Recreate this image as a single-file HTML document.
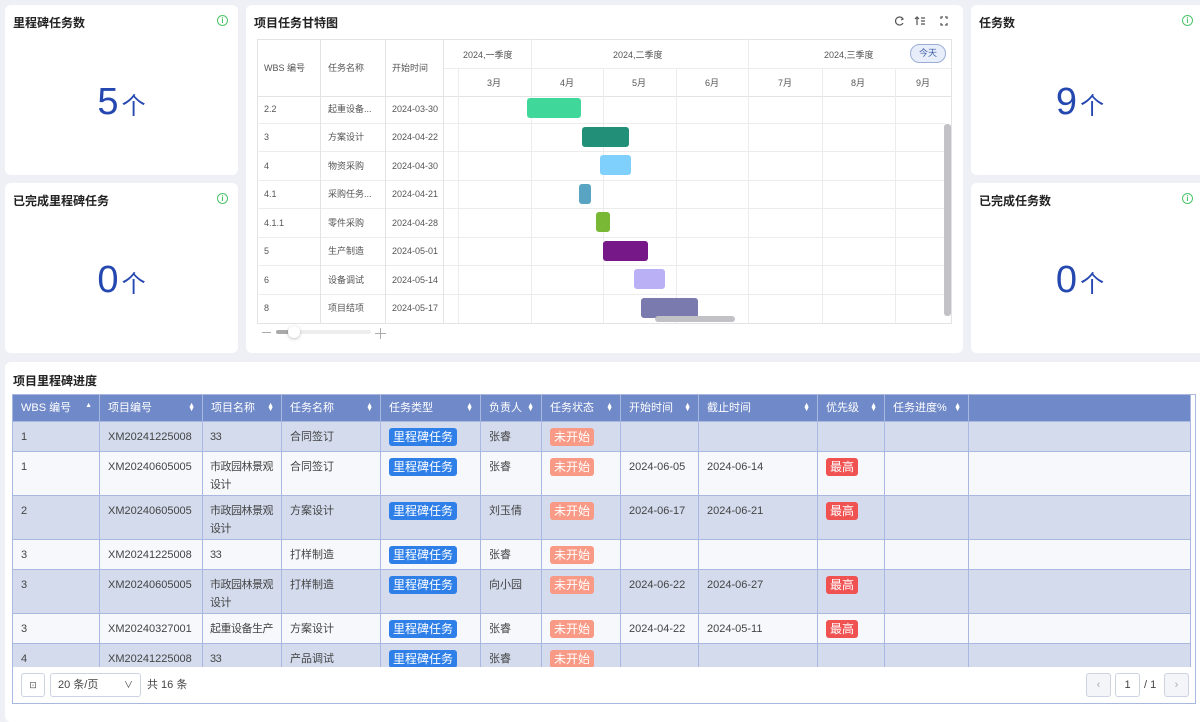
<!DOCTYPE html>
<html><head><meta charset="utf-8"><style>
*{box-sizing:border-box;margin:0;padding:0}
body{width:1200px;height:712px;overflow:hidden;background:#eef0f6;font-family:"Liberation Sans","Noto Sans CJK SC",sans-serif;color:#333;position:relative}
.card{position:absolute;background:#fff;border-radius:6px}
.ttl{position:absolute;left:8px;top:9px;font-size:12px;font-weight:bold;color:#222}
.info{position:absolute;top:10px;width:11px;height:11px;border:1.3px solid #4cc46a;border-radius:50%;font-size:8px;color:#4cc46a;text-align:center;line-height:9px;font-weight:bold}
.num{position:absolute;left:0;right:0;text-align:center;color:#2547b0}
.num b{font-weight:normal;font-size:38px}
.num span{font-size:24px;margin-left:3px}
.a{position:absolute}
.g{position:absolute;font-size:9px;color:#555;line-height:12px;height:12px}
.r{margin-top:2px}
.hl{position:absolute;height:1px;background:#ececec}
.vl{position:absolute;width:1px;background:#ececec}
.bar{position:absolute;border-radius:3px}
table{border-collapse:collapse;table-layout:fixed;font-size:11px}
td,th{border:1px solid #a9b8e0;padding:0 4px 0 8px;text-align:left;vertical-align:top;overflow:hidden}
th{background:#7089c8;color:#fff;font-weight:normal;height:27px;vertical-align:middle;position:relative;line-height:14px}
th i{position:absolute;right:7px;top:9px;font-style:normal;font-size:7px;line-height:4px;color:#fff}
td{color:#444;padding-top:6px;line-height:18px}
td.n{padding-left:7px;padding-right:0;letter-spacing:-0.5px}
tr.o td{background:#d3dbed}
tr.e td{background:#f7f8fb}
.tb,.ts,.tp{display:inline-block;color:#fff;border-radius:3px;line-height:18px;height:18px;font-size:12px;vertical-align:top}
.tb{background:#2f7fe8;padding:0 4px}
.ts{background:#f99a86;padding:0 4px}
.tp{background:#f05252;padding:0 4px}
</style></head><body>

<div class="card" style="left:5px;top:5px;width:233px;height:170px">
<div class="ttl">里程碑任务数</div><div class="info" style="left:212px">i</div>
<div class="num" style="top:76px"><b>5</b><span>个</span></div></div>
<div class="card" style="left:5px;top:183px;width:233px;height:170px">
<div class="ttl">已完成里程碑任务</div><div class="info" style="left:212px">i</div>
<div class="num" style="top:76px"><b>0</b><span>个</span></div></div>
<div class="card" style="left:971px;top:5px;width:240px;height:170px">
<div class="ttl">任务数</div><div class="info" style="left:211px">i</div>
<div class="num" style="top:76px;right:22px"><b>9</b><span>个</span></div></div>
<div class="card" style="left:971px;top:183px;width:240px;height:170px">
<div class="ttl">已完成任务数</div><div class="info" style="left:211px">i</div>
<div class="num" style="top:76px;right:22px"><b>0</b><span>个</span></div></div>

<div class="card" style="left:246px;top:5px;width:717px;height:348px">
<div class="ttl">项目任务甘特图</div>
<svg class="a" style="left:647px;top:10px" width="60" height="12" viewBox="0 0 60 12" fill="none" stroke="#555" stroke-width="1.2">
<path d="M10 4A4 4 0 1 0 10 8"/><path d="M8 2l2 2 -2 1"/>
<path d="M24 10V2M22 4l2-2 2 2M28 3h4M28 6h4M28 9h4"/>
<path d="M48 4V2h2M52 2h2v2M54 8v2h-2M50 10h-2V8"/>
</svg>
</div>

<div class="a" style="left:257px;top:39px;width:695px;height:285px;border:1px solid #e3e3e3;background:#fff"></div>
<div class="hl" style="left:443px;top:68px;width:508px"></div>
<div class="hl" style="left:257px;top:96px;width:694px;background:#e3e3e3"></div>
<div class="hl" style="left:257px;top:123px;width:688px"></div>
<div class="hl" style="left:257px;top:151px;width:688px"></div>
<div class="hl" style="left:257px;top:180px;width:688px"></div>
<div class="hl" style="left:257px;top:208px;width:688px"></div>
<div class="hl" style="left:257px;top:237px;width:688px"></div>
<div class="hl" style="left:257px;top:265px;width:688px"></div>
<div class="hl" style="left:257px;top:294px;width:688px"></div>
<div class="vl" style="left:320px;top:39px;height:284px;background:#e3e3e3"></div>
<div class="vl" style="left:385px;top:39px;height:284px;background:#e3e3e3"></div>
<div class="vl" style="left:443px;top:39px;height:284px;background:#e3e3e3"></div>
<div class="vl" style="left:458px;top:68px;height:255px"></div>
<div class="vl" style="left:531px;top:39px;height:284px"></div>
<div class="vl" style="left:603px;top:68px;height:255px"></div>
<div class="vl" style="left:676px;top:68px;height:255px"></div>
<div class="vl" style="left:748px;top:39px;height:284px"></div>
<div class="vl" style="left:822px;top:68px;height:255px"></div>
<div class="vl" style="left:895px;top:68px;height:255px"></div>
<div class="g" style="left:264px;top:62px">WBS 编号</div>
<div class="g" style="left:328px;top:62px">任务名称</div>
<div class="g" style="left:392px;top:62px">开始时间</div>
<div class="g" style="left:463px;top:49px">2024,一季度</div>
<div class="g" style="left:613px;top:49px">2024,二季度</div>
<div class="g" style="left:824px;top:49px">2024,三季度</div>
<div class="a" style="left:910px;top:44px;width:36px;height:19px;border:1px solid #9aaed8;background:#e8eef9;border-radius:10px;font-size:9px;color:#3a5ba8;text-align:center;line-height:17px">今天</div>
<div class="g" style="left:487px;top:77px">3月</div><div class="g" style="left:560px;top:77px">4月</div>
<div class="g" style="left:632px;top:77px">5月</div><div class="g" style="left:705px;top:77px">6月</div>
<div class="g" style="left:778px;top:77px">7月</div><div class="g" style="left:851px;top:77px">8月</div>
<div class="g" style="left:916px;top:77px">9月</div>

<div class="g r" style="left:264px;top:101px">2.2</div><div class="g r" style="left:328px;top:101px">起重设备...</div><div class="g r" style="left:392px;top:101px">2024-03-30</div>
<div class="g r" style="left:264px;top:129px">3</div><div class="g r" style="left:328px;top:129px">方案设计</div><div class="g r" style="left:392px;top:129px">2024-04-22</div>
<div class="g r" style="left:264px;top:158px">4</div><div class="g r" style="left:328px;top:158px">物资采购</div><div class="g r" style="left:392px;top:158px">2024-04-30</div>
<div class="g r" style="left:264px;top:186px">4.1</div><div class="g r" style="left:328px;top:186px">采购任务...</div><div class="g r" style="left:392px;top:186px">2024-04-21</div>
<div class="g r" style="left:264px;top:215px">4.1.1</div><div class="g r" style="left:328px;top:215px">零件采购</div><div class="g r" style="left:392px;top:215px">2024-04-28</div>
<div class="g r" style="left:264px;top:243px">5</div><div class="g r" style="left:328px;top:243px">生产制造</div><div class="g r" style="left:392px;top:243px">2024-05-01</div>
<div class="g r" style="left:264px;top:272px">6</div><div class="g r" style="left:328px;top:272px">设备调试</div><div class="g r" style="left:392px;top:272px">2024-05-14</div>
<div class="g r" style="left:264px;top:300px">8</div><div class="g r" style="left:328px;top:300px">项目结项</div><div class="g r" style="left:392px;top:300px">2024-05-17</div>

<div class="bar" style="left:527px;top:98px;width:54px;height:20px;background:#3fd89a"></div>
<div class="bar" style="left:582px;top:127px;width:47px;height:20px;background:#229078"></div>
<div class="bar" style="left:600px;top:155px;width:31px;height:20px;background:#80d0fe"></div>
<div class="bar" style="left:579px;top:184px;width:12px;height:20px;background:#5aa4c3"></div>
<div class="bar" style="left:596px;top:212px;width:14px;height:20px;background:#78b834"></div>
<div class="bar" style="left:603px;top:241px;width:45px;height:20px;background:#771888"></div>
<div class="bar" style="left:634px;top:269px;width:31px;height:20px;background:#bab0f6"></div>
<div class="bar" style="left:641px;top:298px;width:57px;height:20px;background:#7b7aae"></div>
<div class="bar" style="left:944px;top:124px;width:7px;height:192px;background:#c2c2c6"></div>
<div class="bar" style="left:655px;top:316px;width:80px;height:6px;background:#c2c2c6"></div>
<div class="a" style="left:262px;top:332px;width:9px;height:1px;background:#aaa"></div>
<div class="a" style="left:276px;top:330px;width:95px;height:4px;background:#eee;border-radius:2px"></div>
<div class="a" style="left:276px;top:330px;width:14px;height:4px;background:#aaa;border-radius:2px"></div>
<div class="a" style="left:288px;top:326px;width:12px;height:12px;background:#fff;border-radius:50%;box-shadow:0 1px 3px rgba(0,0,0,.25)"></div>
<div class="a" style="left:375px;top:333px;width:11px;height:1px;background:#aaa"></div>
<div class="a" style="left:380px;top:328px;width:1px;height:11px;background:#aaa"></div>

<div class="card" style="left:5px;top:362px;width:1200px;height:360px">
<div class="ttl" style="top:10px">项目里程碑进度</div></div>
<div class="a" style="left:12px;top:394px;width:1184px;height:310px;border:1px solid #a9b8e0;background:#fff;overflow:hidden">
<div style="height:273px;overflow:hidden;margin:-1px 0 0 -1px">
<table style="width:1179px">
<colgroup><col style="width:87px"><col style="width:103px"><col style="width:79px"><col style="width:99px"><col style="width:100px"><col style="width:61px"><col style="width:79px"><col style="width:78px"><col style="width:119px"><col style="width:67px"><col style="width:84px"><col style="width:222px"></colgroup>
<tr><th>WBS 编号<i>▲</i></th><th>项目编号<i>▲<br>▼</i></th><th>项目名称<i>▲<br>▼</i></th><th>任务名称<i>▲<br>▼</i></th><th>任务类型<i>▲<br>▼</i></th><th>负责人<i>▲<br>▼</i></th><th>任务状态<i>▲<br>▼</i></th><th>开始时间<i>▲<br>▼</i></th><th>截止时间<i>▲<br>▼</i></th><th>优先级<i>▲<br>▼</i></th><th>任务进度%<i>▲<br>▼</i></th><th></th></tr>
<tr class="o" style="height:30px"><td>1</td><td>XM20241225008</td><td class="n">33</td><td>合同签订</td><td><span class="tb">里程碑任务</span></td><td>张睿</td><td><span class="ts">未开始</span></td><td></td><td></td><td></td><td></td><td></td></tr>
<tr class="e" style="height:44px"><td>1</td><td>XM20240605005</td><td class="n">市政园林景观设计</td><td>合同签订</td><td><span class="tb">里程碑任务</span></td><td>张睿</td><td><span class="ts">未开始</span></td><td>2024-06-05</td><td>2024-06-14</td><td><span class="tp">最高</span></td><td></td><td></td></tr>
<tr class="o" style="height:44px"><td>2</td><td>XM20240605005</td><td class="n">市政园林景观设计</td><td>方案设计</td><td><span class="tb">里程碑任务</span></td><td>刘玉倩</td><td><span class="ts">未开始</span></td><td>2024-06-17</td><td>2024-06-21</td><td><span class="tp">最高</span></td><td></td><td></td></tr>
<tr class="e" style="height:30px"><td>3</td><td>XM20241225008</td><td class="n">33</td><td>打样制造</td><td><span class="tb">里程碑任务</span></td><td>张睿</td><td><span class="ts">未开始</span></td><td></td><td></td><td></td><td></td><td></td></tr>
<tr class="o" style="height:44px"><td>3</td><td>XM20240605005</td><td class="n">市政园林景观设计</td><td>打样制造</td><td><span class="tb">里程碑任务</span></td><td>向小园</td><td><span class="ts">未开始</span></td><td>2024-06-22</td><td>2024-06-27</td><td><span class="tp">最高</span></td><td></td><td></td></tr>
<tr class="e" style="height:30px"><td>3</td><td>XM20240327001</td><td class="n">起重设备生产</td><td>方案设计</td><td><span class="tb">里程碑任务</span></td><td>张睿</td><td><span class="ts">未开始</span></td><td>2024-04-22</td><td>2024-05-11</td><td><span class="tp">最高</span></td><td></td><td></td></tr>
<tr class="o" style="height:30px"><td>4</td><td>XM20241225008</td><td class="n">33</td><td>产品调试</td><td><span class="tb">里程碑任务</span></td><td>张睿</td><td><span class="ts">未开始</span></td><td></td><td></td><td></td><td></td><td></td></tr>
</table></div>
<div class="a" style="left:8px;top:278px;width:24px;height:24px;border:1px solid #cdd3e0;border-radius:3px;font-size:9px;text-align:center;line-height:22px;color:#555">⊡</div>
<div class="a" style="left:37px;top:278px;width:91px;height:24px;border:1px solid #cdd3e0;border-radius:3px;font-size:11px;line-height:22px;padding-left:7px;color:#444">20 条/页<span style="position:absolute;right:7px;font-size:9px">∨</span></div>
<div class="a" style="left:134px;top:278px;font-size:11px;line-height:24px;color:#444">共 16 条</div>
<div class="a" style="left:1073px;top:278px;width:25px;height:24px;border:1px solid #cdd3e0;background:#f4f5f8;border-radius:3px;font-size:11px;text-align:center;line-height:22px;color:#aaa">‹</div>
<div class="a" style="left:1102px;top:278px;width:25px;height:24px;border:1px solid #cdd3e0;border-radius:3px;font-size:11px;text-align:center;line-height:22px;color:#444">1</div>
<div class="a" style="left:1131px;top:278px;font-size:11px;line-height:24px;color:#444">/ 1</div>
<div class="a" style="left:1151px;top:278px;width:25px;height:24px;border:1px solid #cdd3e0;background:#f4f5f8;border-radius:3px;font-size:11px;text-align:center;line-height:22px;color:#aaa">›</div>
</div>
</body></html>
